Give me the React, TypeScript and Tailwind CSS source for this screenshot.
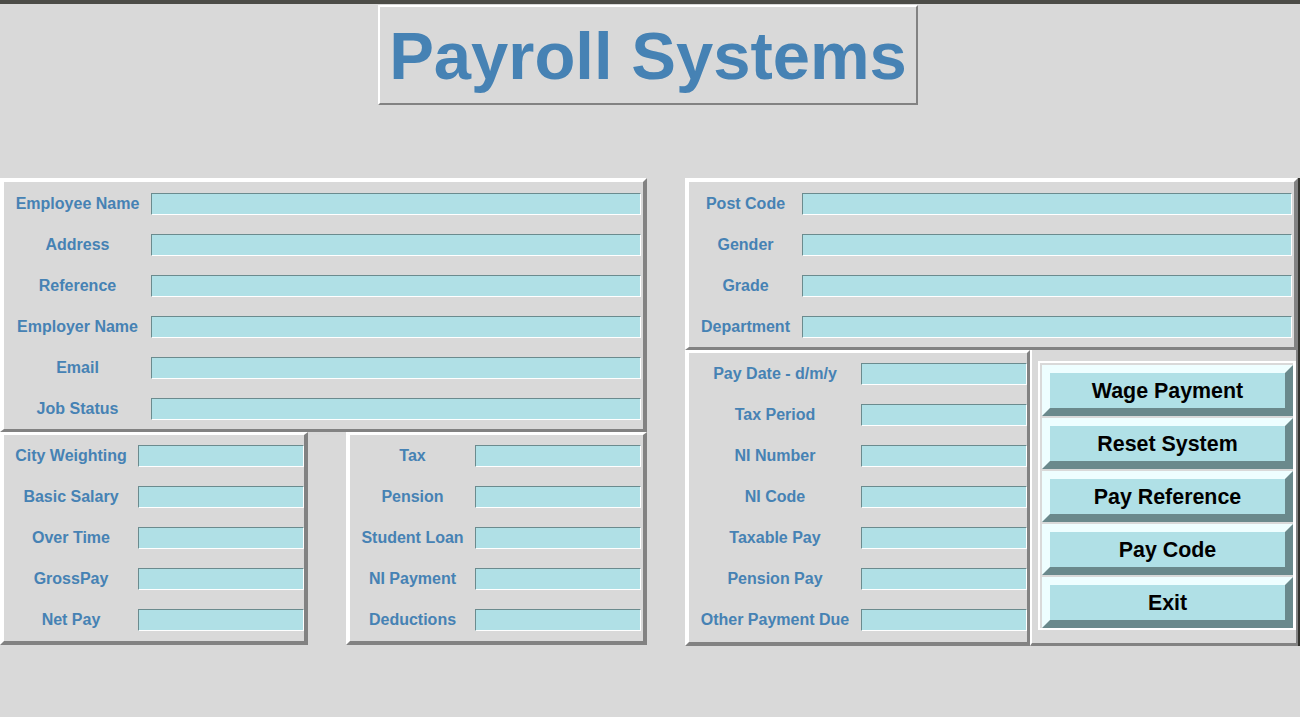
import * as React from 'react'

const frame = 'border-4 border-t-white border-l-white border-r-[#828282] border-b-[#828282] bg-[#d9d9d9]'

function Field({ label, labelW, entryW }: { label: string; labelW: string; entryW: string }) {
  return (
    <div className="flex h-[41px] items-center">
      <div className={`${labelW} text-center text-[16px] font-bold text-[#4682b4] whitespace-nowrap`}>{label}</div>
      <div
        className={`${entryW} h-[22px] bg-[#b0e0e6] border border-t-[#6b8b8e] border-l-[#6b8b8e] border-r-white border-b-white`}
      />
    </div>
  )
}

function Btn({ children }: { children: React.ReactNode }) {
  return (
    <div className="h-[51px] w-[251px] pt-[2px] flex items-center justify-center bg-[#b0e0e6] border-8 border-t-[#eefeff] border-l-[#eefeff] border-r-[#6a898c] border-b-[#6a898c] text-[21.4px] font-bold text-black">
      {children}
    </div>
  )
}

export default function App() {
  const topLeft = ['Employee Name', 'Address', 'Reference', 'Employer Name', 'Email', 'Job Status']
  const bottomLeft = ['City Weighting', 'Basic Salary', 'Over Time', 'GrossPay', 'Net Pay']
  const taxes = ['Tax', 'Pension', 'Student Loan', 'NI Payment', 'Deductions']
  const topRight = ['Post Code', 'Gender', 'Grade', 'Department']
  const payDate = ['Pay Date - d/m/y', 'Tax Period', 'NI Number', 'NI Code', 'Taxable Pay', 'Pension Pay', 'Other Payment Due']
  const buttons = ['Wage Payment', 'Reset System', 'Pay Reference', 'Pay Code', 'Exit']

  return (
    <div className="w-[1300px] h-[717px] bg-[#d9d9d9] overflow-hidden font-['Liberation_Sans',Arial,sans-serif]">
      <div className="h-[4px] bg-[#4c4c47]" />

      {/* title */}
      <div className="mt-[1px] ml-[378px] w-[540px] h-[100px] flex items-center justify-center border-2 border-t-white border-l-white border-r-[#828282] border-b-[#828282]">
        <span className="text-[67px] font-bold text-[#4682b4] leading-none">Payroll Systems</span>
      </div>

      <div className="mt-[73px] flex">
        {/* left side */}
        <div className="w-[647px]">
          <div className={`${frame} border-b-[3px] pt-[1px] pr-[2px]`}>
            {topLeft.map((l) => (
              <Field key={l} label={l} labelW="w-[147px]" entryW="w-[490px]" />
            ))}
          </div>
          <div className="flex">
            <div className={`${frame} border-t-[3px] pb-[1px] w-[308px]`}>
              {bottomLeft.map((l) => (
                <Field key={l} label={l} labelW="w-[134px]" entryW="w-[166px]" />
              ))}
            </div>
            <div className="w-[38px]" />
            <div className={`${frame} border-t-[3px] pb-[1px] w-[301px] pr-[2px]`}>
              {taxes.map((l) => (
                <Field key={l} label={l} labelW="w-[125px]" entryW="w-[166px]" />
              ))}
            </div>
          </div>
        </div>

        <div className="w-[38px]" />

        {/* right side */}
        <div className="w-[613px]">
          <div className={`${frame} border-b-[3px] pt-[1px] pr-[2px]`}>
            {topRight.map((l) => (
              <Field key={l} label={l} labelW="w-[113px]" entryW="w-[490px]" />
            ))}
          </div>
          <div className="flex">
            <div className="w-[345px] border-4 border-t-[3px] border-r-[3px] pb-[1px] border-t-white border-l-white border-r-[#828282] border-b-[#828282]">
              {payDate.map((l) => (
                <Field key={l} label={l} labelW="w-[172px]" entryW="w-[166px]" />
              ))}
            </div>
            <div className="w-[268px] h-[296px] pl-[6px] pt-[11px] border-l-2 border-l-white border-r-2 border-r-[#828282] border-b-[3px] border-b-[#828282]">
              <div className="w-[258px] flex flex-col gap-[2px] pt-[2px] pl-[2px] border-2 border-r-[3px] border-white">
                {buttons.map((b) => (
                  <Btn key={b}>{b}</Btn>
                ))}
              </div>
            </div>
          </div>
        </div>

        <div className="w-[2px] bg-[#33332f]" />
      </div>
    </div>
  )
}
